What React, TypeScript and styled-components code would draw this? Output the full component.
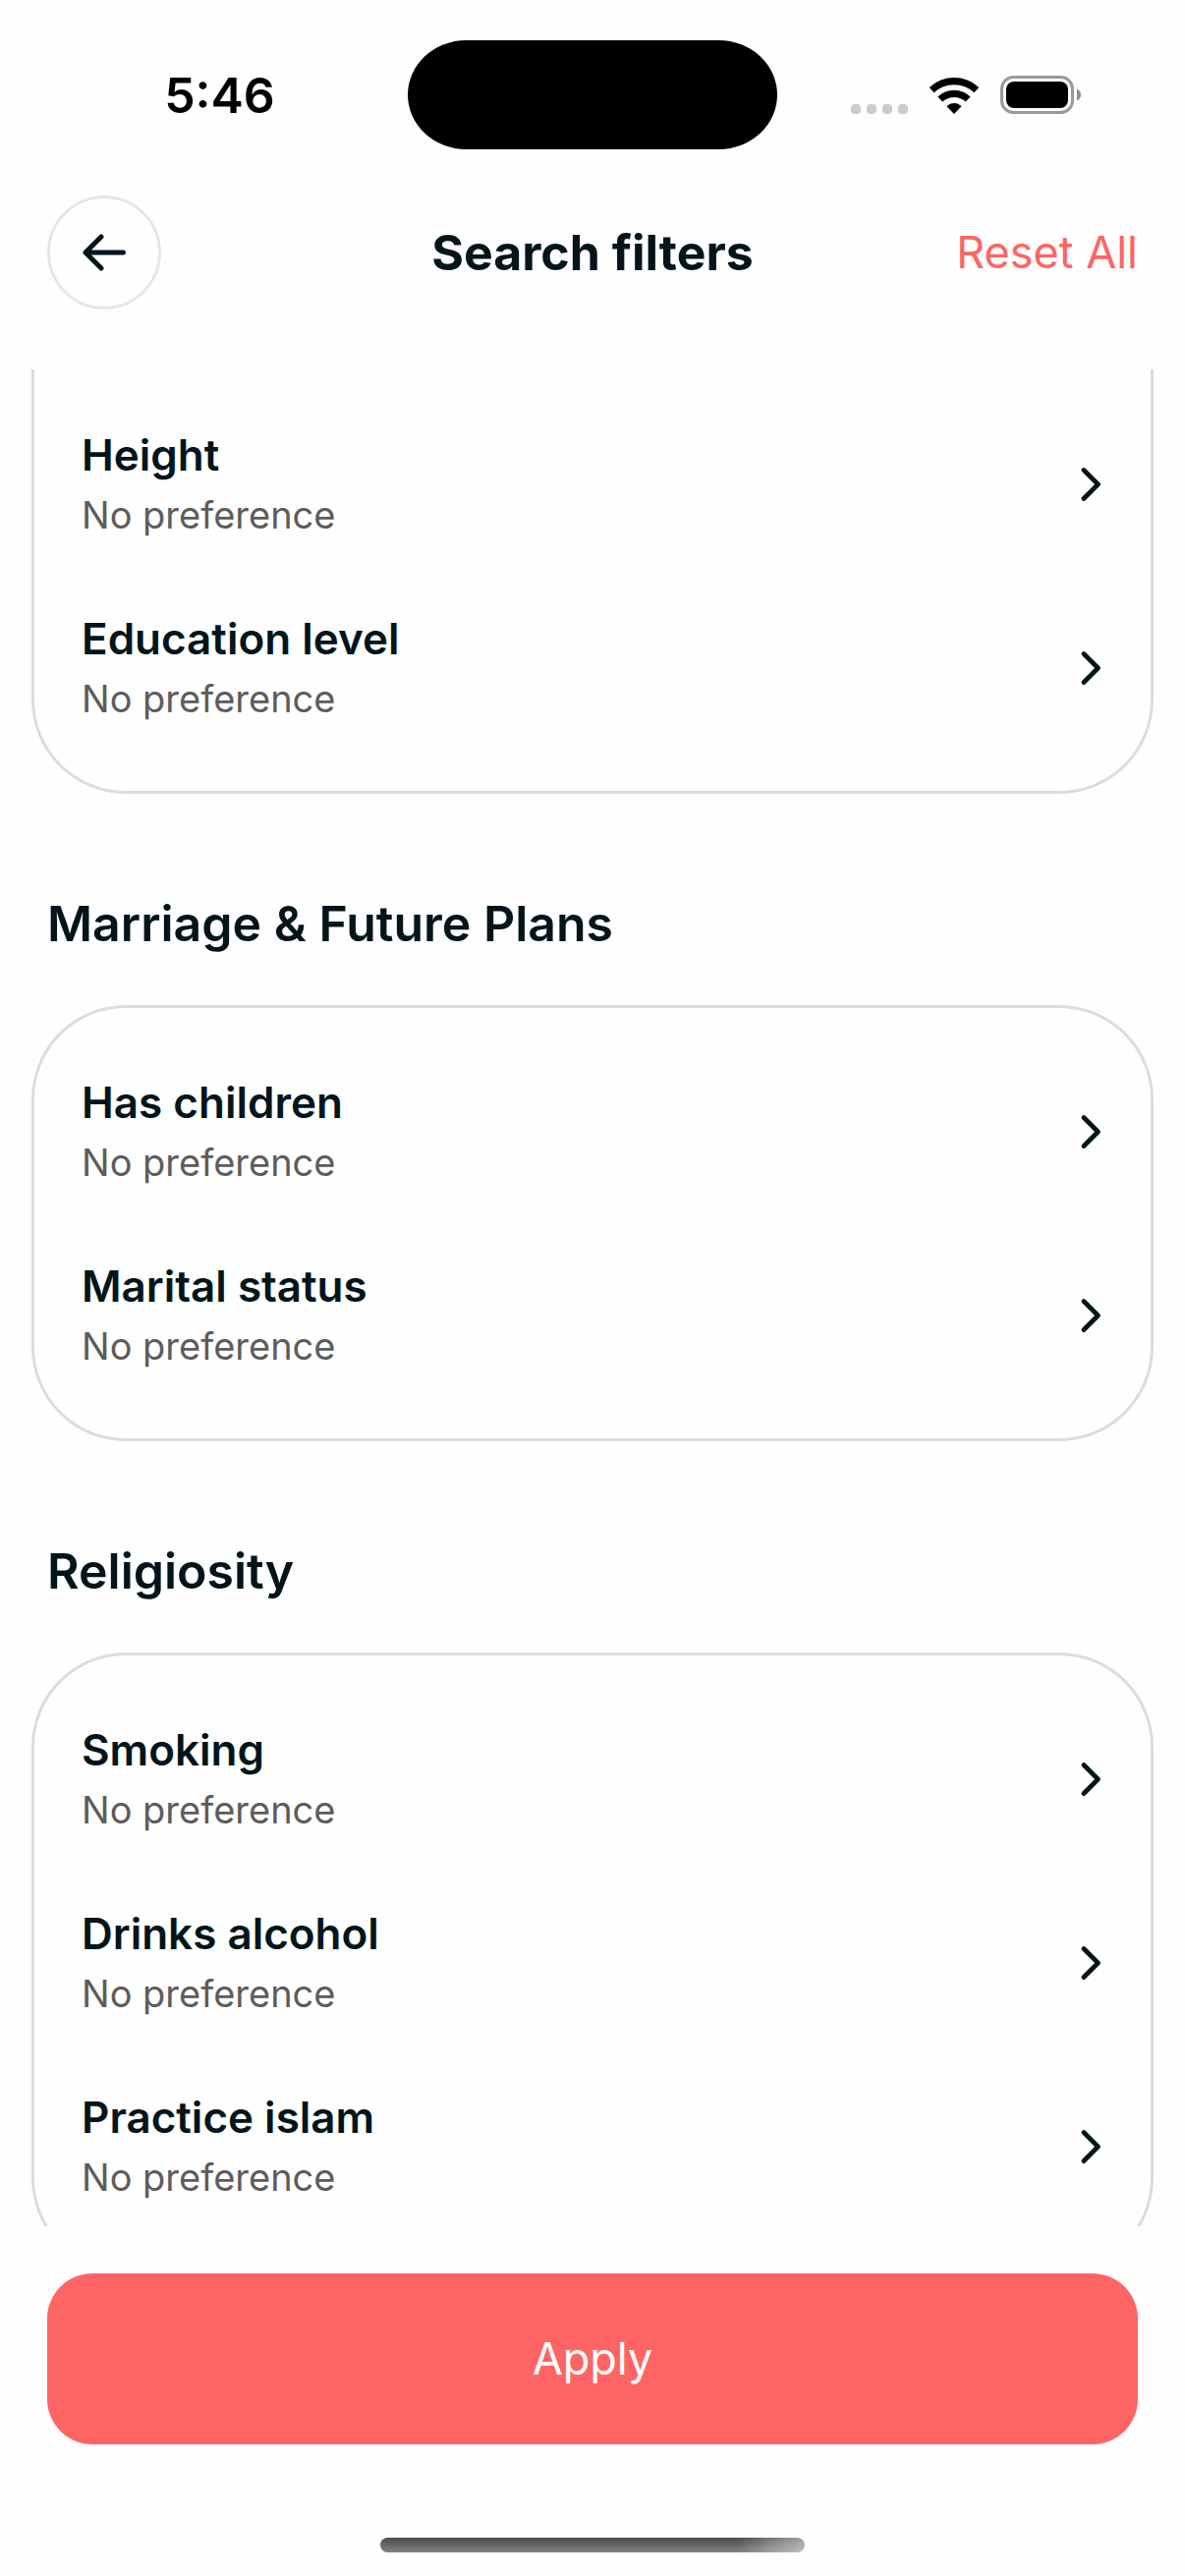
import React from "react";
import styled, { createGlobalStyle } from "styled-components";

const ink = "#03151b";
const coral = "#ff6464";

const GlobalStyle = createGlobalStyle`
  *, *::before, *::after { box-sizing: border-box; }
  body {
    margin: 0;
    background: #fefefe;
    color: ${ink};
    font-family: Inter, "Liberation Sans", sans-serif;
  }
  button { font: inherit; color: inherit; cursor: pointer; }
`;

const Screen = styled.div`
  display: flex;
  flex-direction: column;
  height: 100vh;
  overflow: hidden;
`;

const StatusBar = styled.div`
  display: grid;
  grid-template-columns: 1fr 376px 1fr;
  align-items: center;
  padding: 41px 0 25px;
  color: #000;
`;

const Time = styled.time`
  padding-left: 32px;
  text-align: center;
  font-size: 50px;
  line-height: 60px;
  font-weight: 600;
`;

const Island = styled.div`
  height: 111px;
  border-radius: 60px / 56px;
  background: #000;
`;

const StatusIcons = styled.div`
  display: flex;
  align-items: flex-end;
  justify-content: flex-end;
  gap: 22px;
  padding-right: 105px;

  svg { display: block; }
`;

const Header = styled.header`
  display: grid;
  grid-template-columns: 1fr auto 1fr;
  align-items: center;
  padding: 22px 48px 61px;
`;

const BackButton = styled.button`
  display: grid;
  place-items: center;
  width: 116px;
  height: 116px;
  padding: 0;
  border: 3px solid #e6e6e6;
  border-radius: 50%;
  background: transparent;
`;

const Title = styled.h1`
  margin: 0;
  font-size: 50px;
  line-height: 60px;
  font-weight: 700;
`;

const ResetButton = styled.button`
  justify-self: end;
  padding: 0;
  border: 0;
  background: none;
  && { color: ${coral}; }
  font-size: 45px;
  line-height: 54px;
`;

const Filters = styled.main`
  flex: 1;
  min-height: 0;
  padding: 0 32px;
  overflow-y: auto;
  scrollbar-width: none;
`;

const SectionTitle = styled.h2`
  margin: 102px 16px 53px;
  font-size: 50px;
  line-height: 60px;
  font-weight: 600;
`;

const Card = styled.ul<{ $continued?: boolean }>`
  margin: 0;
  padding: ${(p) => (p.$continued ? "23px 0 32px" : "32px 0")};
  border: 3px solid #dcdcdc;
  border-top-width: ${(p) => (p.$continued ? "0" : "3px")};
  border-radius: ${(p) => (p.$continued ? "0 0 96px 96px" : "96px")};
  list-style: none;
`;

const RowButton = styled.button`
  display: flex;
  align-items: center;
  justify-content: space-between;
  width: 100%;
  padding: 37px 48px;
  border: 0;
  background: none;
  text-align: left;

  svg { display: block; }
`;

const RowText = styled.span`
  display: flex;
  flex-direction: column;
  gap: 9px;
`;

const RowLabel = styled.span`
  font-size: 44px;
  line-height: 54px;
  font-weight: 600;
`;

const RowValue = styled.span`
  font-size: 38px;
  line-height: 50px;
  color: #5c5c5c;
`;

const Footer = styled.footer`
  display: flex;
  flex-direction: column;
  align-items: center;
  gap: 95px;
  padding: 48px 48px 24px;
`;

const ApplyButton = styled.button`
  width: 100%;
  padding: 60px 48px;
  border: 0;
  border-radius: 46px;
  background: ${coral};
  && { color: #fff; }
  font-size: 45px;
  line-height: 54px;
`;

const HomeIndicator = styled.div`
  width: 432px;
  height: 15px;
  border-radius: 8px;
  background:
    linear-gradient(100deg, transparent 84%, rgba(255, 255, 255, 0.5)),
    linear-gradient(#4c4c4c, #808080);
`;

const Cellular = () => (
  <svg width="58" height="38" viewBox="0 0 58 38" aria-hidden="true">
    {[0, 16, 32, 48].map((x) => (
      <rect key={x} x={x} y="28" width="10" height="10" rx="4" fill="#cbcbcb" />
    ))}
  </svg>
);

const Wifi = () => (
  <svg width="50" height="38" viewBox="0 0 50 38" aria-hidden="true">
    <g fill="none" stroke="#000" strokeWidth="7.2">
      <path d="M2.2 13.6A33.6 33.6 0 0 1 47.8 13.6" />
      <path d="M10.8 23A20.7 20.7 0 0 1 39.2 23" />
    </g>
    <path d="M25 38L17.9 30.8Q17.4 30 18.2 29.4A11.3 11.3 0 0 1 31.8 29.4Q32.6 30 32.1 30.8Z" />
  </svg>
);

const Battery = () => (
  <svg width="83" height="39" viewBox="0 0 83 39" aria-hidden="true">
    <rect x="1.5" y="1.5" width="72" height="36" rx="12" fill="none" stroke="#999" strokeWidth="3" />
    <rect x="6" y="6" width="63" height="27" rx="8" />
    <path d="M78 13.5Q82 15.5 82 19.5T78 25.5Z" fill="#8c8c8c" />
  </svg>
);

const ArrowLeft = () => (
  <svg width="46" height="40" viewBox="0 0 46 40" fill="none" stroke={ink} strokeWidth="5" strokeLinecap="round" strokeLinejoin="round" aria-hidden="true">
    <path d="M42.5 20H4M20 4L4 20L20 36" />
  </svg>
);

const ChevronRight = () => (
  <svg width="24" height="36" viewBox="0 0 24 36" fill="none" stroke={ink} strokeWidth="4.8" strokeLinecap="round" strokeLinejoin="round" aria-hidden="true">
    <path d="M4 3.5L18.5 18L4 32.5" />
  </svg>
);

type Section = { title?: string; filters: string[] };

const sections: Section[] = [
  { filters: ["Height", "Education level"] },
  { title: "Marriage & Future Plans", filters: ["Has children", "Marital status"] },
  { title: "Religiosity", filters: ["Smoking", "Drinks alcohol", "Practice islam"] },
];

const FilterRow = ({ label, value = "No preference" }: { label: string; value?: string }) => (
  <li>
    <RowButton type="button">
      <RowText>
        <RowLabel>{label}</RowLabel>
        <RowValue>{value}</RowValue>
      </RowText>
      <ChevronRight />
    </RowButton>
  </li>
);

export default function App() {
  return (
    <Screen>
      <GlobalStyle />
      <StatusBar>
        <Time>5:46</Time>
        <Island />
        <StatusIcons>
          <Cellular />
          <Wifi />
          <Battery />
        </StatusIcons>
      </StatusBar>
      <Header>
        <BackButton type="button" aria-label="Back">
          <ArrowLeft />
        </BackButton>
        <Title>Search filters</Title>
        <ResetButton type="button">Reset All</ResetButton>
      </Header>
      <Filters>
        {sections.map(({ title, filters }) => (
          <section key={filters[0]}>
            {title && <SectionTitle>{title}</SectionTitle>}
            <Card $continued={!title}>
              {filters.map((label) => (
                <FilterRow key={label} label={label} />
              ))}
            </Card>
          </section>
        ))}
      </Filters>
      <Footer>
        <ApplyButton type="button">Apply</ApplyButton>
        <HomeIndicator />
      </Footer>
    </Screen>
  );
}
